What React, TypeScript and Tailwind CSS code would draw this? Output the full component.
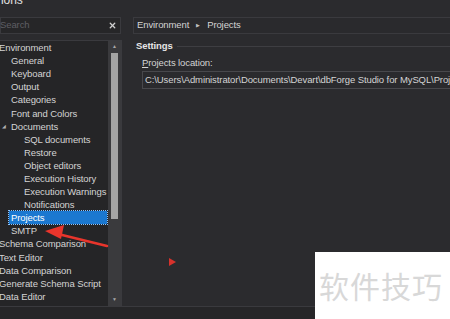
import { X } from "lucide-react";

//Setup the Tree Items
const treeItems: { label: string; level: number; expander?: boolean; selected?: boolean }[] = [
	{ label: "Environment", level: 0 },
	{ label: "General", level: 1 },
	{ label: "Keyboard", level: 1 },
	{ label: "Output", level: 1 },
	{ label: "Categories", level: 1 },
	{ label: "Font and Colors", level: 1 },
	{ label: "Documents", level: 1, expander: true },
	{ label: "SQL documents", level: 2 },
	{ label: "Restore", level: 2 },
	{ label: "Object editors", level: 2 },
	{ label: "Execution History", level: 2 },
	{ label: "Execution Warnings", level: 2 },
	{ label: "Notifications", level: 2 },
	{ label: "Projects", level: 1, selected: true },
	{ label: "SMTP", level: 1 },
	{ label: "Schema Comparison", level: 0 },
	{ label: "Text Editor", level: 0 },
	{ label: "Data Comparison", level: 0 },
	{ label: "Generate Schema Script", level: 0 },
	{ label: "Data Editor", level: 0 },
];

//Setup the Page
export default function App() {
	return (
		<div
			className="relative w-[450px] h-[319px] overflow-hidden bg-[#2b2b2e] text-[#d4d4d4] text-[9.5px] tracking-[-0.1px]"
			style={{ fontFamily: '"Liberation Sans", Arial, sans-serif' }}
		>
			{/*Setup the Window Title*/}
			<div className="h-[15px] -mt-[7px] pl-[1px] text-[12px] text-[#e0e0e0] leading-[15px]">ions</div>

			{/*Setup the Body*/}
			<div className="flex h-[289px] mt-[9px]">
				{/*Setup the Left Column*/}
				<div className="flex flex-col w-[122px] shrink-0">
					{/*Setup the Search Box*/}
					<div className="h-[17px] w-[121px] border border-[#3a3a3e] bg-[#262628] flex items-center justify-between pr-[3px]">
						<span className="text-[#5e5e64] -ml-[1px]">Search</span>
						<X size={9} strokeWidth={3.5} className="text-[#d0d0d0]" />
					</div>

					{/*Setup the Tree*/}
					<div className="mt-[6px] h-[266px] w-[122px] border-r border-t border-[#3a3a3e] bg-[#252527] flex">
						<div className="flex-1 -ml-[1px]">
							{treeItems.map(item => (
								<div key={item.label} className="h-[13.1px] flex items-center leading-[13px]">
									<div
										className={
											item.level === 0
												? "w-0"
												: item.level === 1
													? "w-[12px] shrink-0 flex justify-center"
													: "w-[25px] shrink-0"
										}
									>
										{item.expander && <span className="text-[5px] text-[#b0b0b0] -ml-[3px]">◢</span>}
									</div>
									<span
										className={
											item.selected
												? "bg-[#1b78d0] outline outline-1 outline-dotted outline-[#8cc4ff] text-white pl-[2px] -ml-[2px] w-[98px] h-[13px] leading-[13px]"
												: "whitespace-nowrap"
										}
									>
										{item.label}
									</span>
								</div>
							))}
						</div>

						{/*Setup the Scrollbar*/}
						<div className="w-[13px] shrink-0 bg-[#3a3a3d] flex flex-col items-center">
							<div className="h-[12px] flex items-center text-[5px] text-[#a8a8a8]">▲</div>
							<div className="w-[7px] h-[166px] bg-[#a4a4a4]" />
							<div className="flex-1" />
							<div className="h-[12px] flex items-center text-[5px] text-[#a8a8a8]">▼</div>
						</div>
					</div>
				</div>

				{/*Setup the Right Column*/}
				<div className="flex-1 pl-[11px] flex flex-col">
					{/*Setup the Breadcrumb*/}
					<div className="h-[17px] border border-[#3a3a3e] bg-[#2a2a2d] flex items-center pl-[3px] gap-[7px]">
						<span>Environment</span>
						<span className="text-[5px] text-[#c0c0c0]">▶</span>
						<span>Projects</span>
					</div>

					{/*Setup the Settings Header*/}
					<div className="mt-[5px] flex items-center gap-[4px] pl-[3px]">
						<span className="font-bold text-[#e6e6e6]">Settings</span>
						<div className="flex-1 h-px bg-[#3e3e42]" />
					</div>

					{/*Setup the Projects Location*/}
					<div className="mt-[3px] pl-[9px] leading-[13px]">
						<span className="underline">P</span>rojects location:
					</div>
					<div className="mt-[2px] ml-[9px] h-[18px] border border-[#48484c] bg-[#2a2a2d] flex items-center pl-[2px] whitespace-nowrap overflow-hidden">
						C:\Users\Administrator\Documents\Devart\dbForge Studio for MySQL\Projects
					</div>
				</div>
			</div>

			{/*Setup the Footer*/}
			<div className="h-[13px] border-t border-[#3a3a3e] bg-[#262628]" />

			{/*Setup the Red Arrow Annotation*/}
			<svg className="absolute left-0 top-0" width="450" height="319">
				<path d="M107 246 L58 234" stroke="#e8352c" strokeWidth="2.5" strokeLinecap="round" />
				<polygon points="45,231 64,225 61,239" fill="#e8352c" />
				<polygon points="169,258 176,262 169,266" fill="#d8322c" />
			</svg>

			{/*Setup the Watermark*/}
			<div
				className="absolute left-[315px] top-[252px] w-[135px] h-[67px] bg-white flex items-center pl-[4px] text-[30px] text-[#d8d8d8] tracking-[1px]"
				style={{ fontFamily: '"Noto Sans CJK SC", sans-serif' }}
			>
				软件技巧
			</div>
		</div>
	);
}
